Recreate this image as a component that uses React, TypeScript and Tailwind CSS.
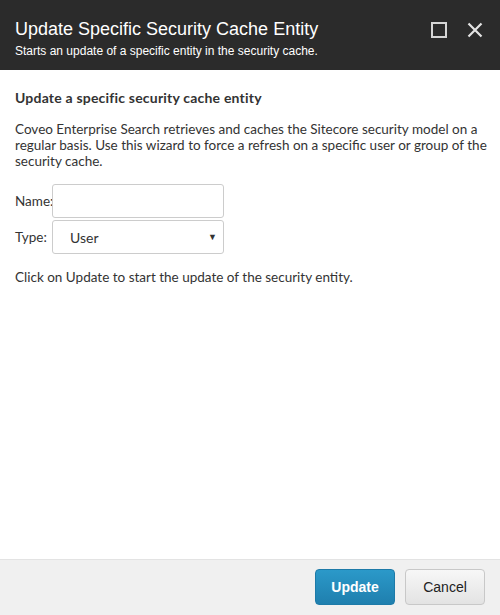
import { useState } from 'react';

export default function App() {
  const [name, setName] = useState('');

  return (
    <div className="flex h-[615px] w-[500px] flex-col bg-white">
      {/* header */}
      <div className="flex h-[70px] items-start justify-between bg-[#2b2b2b] px-[15px] pt-[18px] font-['Liberation_Sans',Arial,sans-serif] text-white">
        <div>
          <h1 className="text-[18px] leading-[22px]">Update Specific Security Cache Entity</h1>
          <p className="mt-[4px] text-[12px] leading-[14px]">Starts an update of a specific entity in the security cache.</p>
        </div>
        <div className="mt-[4px] flex items-center gap-[20px] pr-[2px]">
          <svg width="16" height="16" viewBox="0 0 16 16">
            <rect x="1" y="1" width="14" height="14" fill="none" stroke="#d6d6d6" strokeWidth="2" />
          </svg>
          <svg width="16" height="16" viewBox="0 0 16 16">
            <path d="M1.5 1.5 L14.5 14.5 M14.5 1.5 L1.5 14.5" stroke="#e4e4e4" strokeWidth="2.2" />
          </svg>
        </div>
      </div>

      {/* body */}
      <div className="flex-1 px-[15px] pt-[19px] font-['Lato',sans-serif] text-[13.5px] text-[#333]">
        <h2 className="text-[14px] font-bold leading-[18px] tracking-[0.2px]">Update a specific security cache entity</h2>
        <p className="mt-[14px] whitespace-nowrap leading-[16px]">
          Coveo Enterprise Search retrieves and caches the Sitecore security model on a
          <br />
          regular basis. Use this wizard to force a refresh on a specific user or group of the
          <br />
          security cache.
        </p>

        <div className="mt-[15px] flex flex-col gap-[2px]">
          <div className="flex items-center">
            <label className="w-[37px]">Name:</label>
            <input
              value={name}
              onChange={(e) => setName(e.target.value)}
              className="h-[34px] w-[172px] rounded-[3px] border border-[#ccc] px-2 outline-none"
            />
          </div>
          <div className="flex items-center">
            <label className="w-[37px]">Type:</label>
            <div className="relative flex h-[34px] w-[172px] items-center rounded-[3px] border border-[#ccc] pl-[17px] text-[14px]">
              User
              <span className="absolute right-[6px] top-[9px] text-[9px] text-[#333]">▼</span>
            </div>
          </div>
        </div>

        <p className="mt-[15px] leading-[16px]">Click on Update to start the update of the security entity.</p>
      </div>

      {/* footer */}
      <div className="flex h-[56px] items-start justify-end gap-[10px] border-t border-[#e3e3e3] bg-[#f0f0f0] pr-[15px] pt-[9px] font-['Liberation_Sans',Arial,sans-serif] text-[14px]">
        <button className="h-[36px] w-[80px] rounded-[4px] border border-[#1d7aa8] bg-gradient-to-b from-[#2b99c9] to-[#1f7fae] font-bold text-white">
          Update
        </button>
        <button className="h-[36px] w-[80px] rounded-[4px] border border-[#c8c8c8] bg-gradient-to-b from-[#f7f7f7] to-[#e3e3e3] text-[#222]">
          Cancel
        </button>
      </div>
    </div>
  );
}
